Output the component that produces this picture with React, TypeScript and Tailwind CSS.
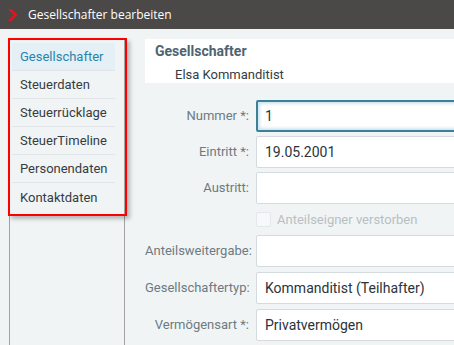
import React from "react";

const menu = [
  "Gesellschafter",
  "Steuerdaten",
  "Steuerrücklage",
  "SteuerTimeline",
  "Personendaten",
  "Kontaktdaten",
];

function Field({
  label,
  value,
  focused,
  className,
}: {
  label: string;
  value?: string;
  focused?: boolean;
  className?: string;
}) {
  return (
    <div className={`flex items-center ${className ?? ""}`}>
      <div className="w-[105px] shrink-0 pr-[1px] text-right text-[13px] text-[#6d7a83]">
        {label}
      </div>
      <div
        className={
          focused
            ? "ml-[6px] flex h-[32px] flex-1 items-center rounded-[2px] border-2 border-[#3c7f98] bg-white pl-[7px] text-[14px] text-[#2a343b] shadow-[inset_0_0_3px_2px_#cfe6ef]"
            : "ml-[6px] flex h-[32px] flex-1 items-center rounded-[2px] border border-[#d3dbdf] bg-white pl-[8px] text-[14px] text-[#2a343b]"
        }
      >
        {value}
      </div>
    </div>
  );
}

export default function App() {
  return (
    <div className="relative h-[345px] w-[454px] overflow-hidden bg-[#f1f4f5] font-['Roboto',sans-serif]">
      {/* title bar */}
      <div className="flex h-[29px] items-center bg-[#4b4947]">
        <svg className="ml-[8px]" width="10" height="12" viewBox="0 0 10 12">
          <polygon points="0,0 3.5,0 9.5,6 3.5,12 0,12 5.5,6" fill="#e3141c" />
        </svg>
        <span className="ml-[10px] font-['Open_Sans',sans-serif] text-[12px] text-white">
          Gesellschafter bearbeiten
        </span>
      </div>

      <div className="flex h-[316px] pt-[10px]">
        {/* sidebar */}
        <div className="relative ml-[9px] w-[116px] shrink-0 border-x border-[#a3a3a3]">
          <div className="ml-[2px] mt-[4px] w-[103px]">
            {menu.map((m, i) => (
              <div
                key={m}
                className={
                  i === 0
                    ? "flex h-[28px] items-center border-b border-[#e1e5e7] bg-[#e4f0f5] pl-[8px] pt-[1px] text-[13px] text-[#2685ae]"
                    : i === menu.length - 1
                      ? "flex h-[28px] items-center pl-[8px] pt-[1px] text-[13px] text-[#333d44]"
                      : "flex h-[28px] items-center border-b border-[#e1e5e7] pl-[8px] pt-[1px] text-[13px] text-[#333d44]"
                }
              >
                {m}
              </div>
            ))}
          </div>
          {/* red highlight */}
          <div className="absolute left-[-2px] top-[-1px] h-[178px] w-[119px] border-2 border-[#ff0000] shadow-[3px_3px_4px_rgba(0,0,0,0.25)]" />
        </div>

        {/* content */}
        <div className="-mr-[20px] ml-[20px] flex-1">
          <div className="h-[44px] bg-white pl-[10px] pt-[2px]">
            <div className="text-[14px] font-bold text-[#4d6471]">Gesellschafter</div>
            <div className="ml-[20px] mt-[3px] text-[13px] text-[#333d44]">Elsa Kommanditist</div>
          </div>

          <Field label="Nummer *:" value="1" focused className="mt-[17px]" />
          <Field label="Eintritt *:" value="19.05.2001" className="mt-[4px]" />
          <Field label="Austritt:" className="mt-[4px]" />
          <div className="flex h-[31px] items-center pl-[111px]">
            <div className="h-[15px] w-[15px] rounded-[2px] border border-[#e3e8ea] bg-[#f6f8f9]" />
            <span className="ml-[6px] text-[13px] text-[#b8bfc3]">Anteilseigner verstorben</span>
          </div>
          <Field label="Anteilsweitergabe:" />
          <Field label="Gesellschaftertyp:" value="Kommanditist (Teilhafter)" className="mt-[5px]" />
          <Field label="Vermögensart *:" value="Privatvermögen" className="mt-[5px]" />
        </div>
      </div>
    </div>
  );
}
